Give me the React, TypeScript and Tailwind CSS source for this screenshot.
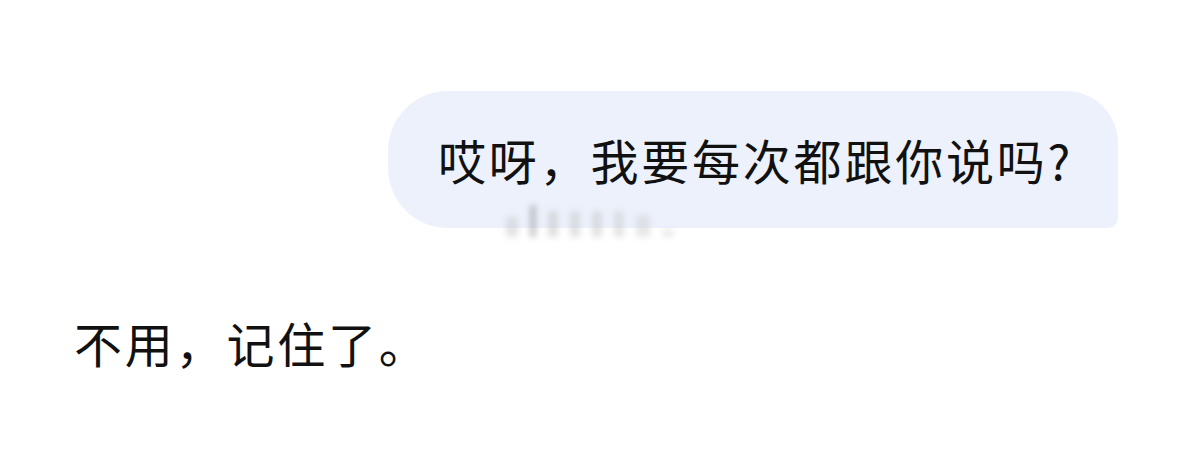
import React from "react";

const font = { fontFamily: '"Noto Sans CJK SC", "Noto Sans", sans-serif' };

export default function App() {
  return (
    <div className="w-[1179px] h-[450px] bg-white overflow-hidden" style={font}>
      <div className="flex justify-end pt-[91px] pr-[61px]">
        <div className="relative w-[730px] h-[137px] bg-[#ecf1fc] rounded-tl-[60px] rounded-bl-[60px] rounded-tr-[52px] rounded-br-[10px] pl-[50px] pt-[38px]">
          <p className="text-[48px] leading-[60px] text-[#111] tracking-[2.8px] whitespace-nowrap">
            哎呀，我要每次都跟你说吗?
          </p>
          {/* blurred timestamp under the bubble */}
          <div className="absolute left-[118px] top-[114px] flex items-end gap-[12px] blur-[3px] opacity-50">
            <div className="w-[12px] h-[20px] bg-[#c8c8c8]" />
            <div className="w-[6px] h-[32px] bg-[#8a8a8a]" />
            <div className="w-[10px] h-[26px] bg-[#c0c0c0]" />
            <div className="w-[10px] h-[26px] bg-[#c4c4c4]" />
            <div className="w-[10px] h-[26px] bg-[#c4c4c4]" />
            <div className="w-[10px] h-[26px] bg-[#cacaca]" />
            <div className="w-[14px] h-[22px] bg-[#cfcfcf]" />
            <div className="w-[12px] h-[8px] bg-[#d8d8d8]" />
          </div>
        </div>
      </div>
      <div className="pl-[74px] pt-[84px]">
        <p className="text-[48px] leading-[60px] text-[#111] tracking-[2.8px] whitespace-nowrap">
          不用，记住了。
        </p>
      </div>
    </div>
  );
}
